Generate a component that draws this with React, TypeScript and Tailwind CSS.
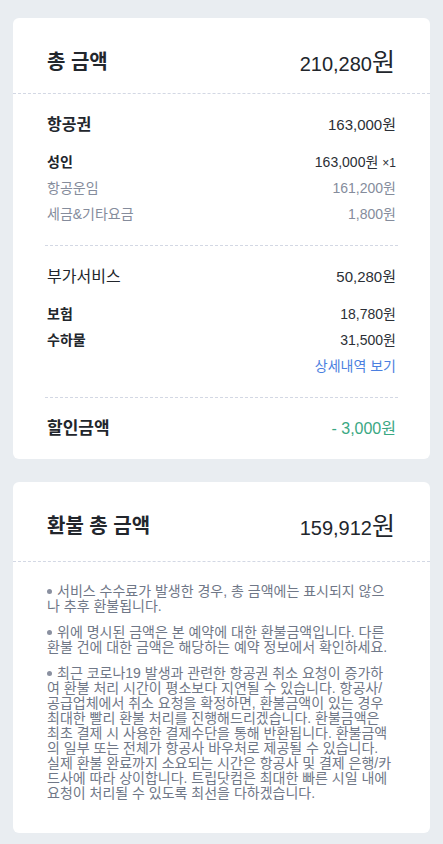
const font = { fontFamily: '"Liberation Sans", "Noto Sans CJK KR", sans-serif' }

type Row = { label: string; value: string; muted?: boolean; suffix?: string }

const ticketRows: Row[] = [
  { label: "성인", value: "163,000원", suffix: "×1" },
  { label: "항공운임", value: "161,200원", muted: true },
  { label: "세금&기타요금", value: "1,800원", muted: true },
]

const extraRows: Row[] = [
  { label: "보험", value: "18,780원" },
  { label: "수하물", value: "31,500원" },
]

// lines kept as in the original wrapping
const notes = [
  ["서비스 수수료가 발생한 경우, 총 금액에는 표시되지 않으", "나 추후 환불됩니다."],
  ["위에 명시된 금액은 본 예약에 대한 환불금액입니다. 다른", "환불 건에 대한 금액은 해당하는 예약 정보에서 확인하세요."],
  [
    "최근 코로나19 발생과 관련한 항공권 취소 요청이 증가하",
    "여 환불 처리 시간이 평소보다 지연될 수 있습니다. 항공사/",
    "공급업체에서 취소 요청을 확정하면, 환불금액이 있는 경우",
    "최대한 빨리 환불 처리를 진행해드리겠습니다. 환불금액은",
    "최초 결제 시 사용한 결제수단을 통해 반환됩니다. 환불금액",
    "의 일부 또는 전체가 항공사 바우처로 제공될 수 있습니다.",
    "실제 환불 완료까지 소요되는 시간은 항공사 및 결제 은행/카",
    "드사에 따라 상이합니다. 트립닷컴은 최대한 빠른 시일 내에",
    "요청이 처리될 수 있도록 최선을 다하겠습니다.",
  ],
]

function CardHeader({ title, amount, tall }: { title: string; amount: string; tall?: boolean }) {
  return (
    <div
      className={`flex items-start justify-between px-[34px] pt-[33px] border-b border-dashed border-[#d3d8e4] ${tall ? "h-[80px]" : "h-[76px]"}`}
    >
      <div className="text-[20px] leading-[22px] font-bold text-[#22262c]">{title}</div>
      <div className="flex items-baseline leading-[22px] text-[#22262c] mr-[1px]">
        <span className="text-[20px]">{amount}</span>
        <span className="text-[25px]">원</span>
      </div>
    </div>
  )
}

function DetailRow({ row }: { row: Row }) {
  return (
    <div className="flex h-[26px] items-center justify-between text-[14px]">
      <span className={row.muted ? "text-[#858c9c]" : "font-bold text-[#22262c]"}>{row.label}</span>
      <span className={row.muted ? "text-[#858c9c]" : "text-[#2b2f36]"}>
        {row.value}
        {row.suffix && <span className="ml-[4px] text-[12px]">{row.suffix}</span>}
      </span>
    </div>
  )
}

function Divider() {
  return <div className="mt-[18px] border-t border-dashed border-[#d3d8e4] -mx-[2px]" />
}

export default function App() {
  return (
    <div style={font} className="min-h-[844px] bg-[#e9edf1] px-[13px] pt-[18px] pb-[12px]">
      <div className="rounded-md bg-white">
        <CardHeader title="총 금액" amount="210,280" />
        <div className="px-[34px] pb-[19px]">
          <div className="pt-[20px]">
            <div className="flex h-[22px] items-center justify-between">
              <span className="text-[16px] font-semibold text-[#22262c]">항공권</span>
              <span className="text-[15px] text-[#2b2f36]">163,000원</span>
            </div>
            <div className="mt-[13px]">
              {ticketRows.map(r => <DetailRow key={r.label} row={r} />)}
            </div>
          </div>
          <Divider />
          <div className="pt-[20px]">
            <div className="flex h-[22px] items-center justify-between">
              <span className="text-[16px] text-[#22262c]">부가서비스</span>
              <span className="text-[15px] text-[#2b2f36]">50,280원</span>
            </div>
            <div className="mt-[13px]">
              {extraRows.map(r => <DetailRow key={r.label} row={r} />)}
              <div className="flex h-[26px] items-center justify-end text-[14px] text-[#4b7fe0]">상세내역 보기</div>
            </div>
          </div>
          <Divider />
          <div className="pt-[20px]">
            <div className="flex h-[22px] items-center justify-between">
              <span className="text-[17px] font-semibold text-[#22262c]">할인금액</span>
              <span className="text-[16px] text-[#3aa883]">- 3,000원</span>
            </div>
          </div>
        </div>
      </div>

      <div className="mt-[23px] rounded-md bg-white">
        <CardHeader title="환불 총 금액" amount="159,912" tall />
        <div className="px-[34px] pt-[22px] pb-[32px]">
          {notes.map((lines, i) => (
            <div key={i} className="mb-[11px] text-[14px] text-[#6f7787] last:mb-0">
              {lines.map((line, j) => (
                <div key={j} className="flex h-[15px] items-center whitespace-nowrap leading-[15px]">
                  {j === 0 && <span className="mr-[5px] inline-block h-[5px] w-[5px] rounded-full bg-[#8a90a0]" />}
                  {line}
                </div>
              ))}
            </div>
          ))}
        </div>
      </div>
    </div>
  )
}
